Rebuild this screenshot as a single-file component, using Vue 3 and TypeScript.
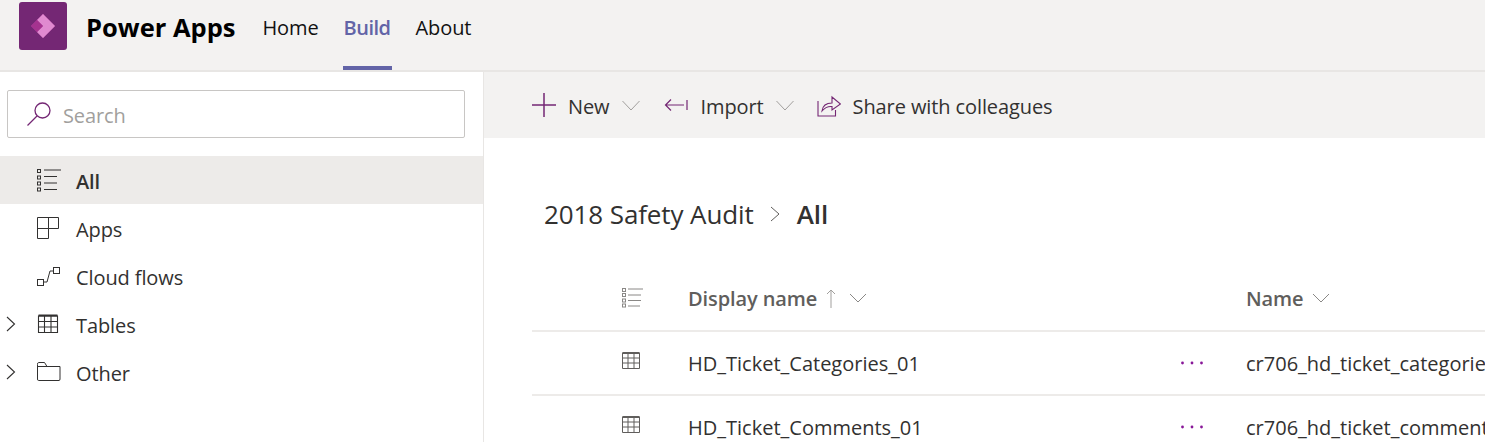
<script setup lang="ts">
interface NavItem { label: string; icon: string; expandable: boolean; active: boolean }
const nav: NavItem[] = [
  { label: 'All', icon: 'list', expandable: false, active: true },
  { label: 'Apps', icon: 'apps', expandable: false, active: false },
  { label: 'Cloud flows', icon: 'flow', expandable: false, active: false },
  { label: 'Tables', icon: 'table', expandable: true, active: false },
  { label: 'Other', icon: 'folder', expandable: true, active: false },
]
const rows = [
  { display: 'HD_Ticket_Categories_01', name: 'cr706_hd_ticket_categories_01' },
  { display: 'HD_Ticket_Comments_01', name: 'cr706_hd_ticket_comments_01' },
]
</script>

<template>
  <div class="page">
    <header class="topbar">
      <div class="logo">
        <svg width="26" height="26" viewBox="0 0 26 26">
          <path d="M13 1 L25 13 L13 25 L1 13 Z" fill="#b3409f" />
          <path d="M13 1 L25 13 L13 25 L7 19 L13 13 L7 7 Z" fill="#e08ad0" />
          <path d="M7 7 L13 13 L7 19 L1 13 Z" fill="#a5338f" />
        </svg>
      </div>
      <span class="brand">Power Apps</span>
      <nav class="tabs">
        <a class="tab">Home</a>
        <a class="tab tab-on">Build</a>
        <a class="tab">About</a>
      </nav>
    </header>
    <div class="body">
      <aside class="side">
        <div class="search">
          <svg class="search-ico" width="26" height="26" viewBox="0 0 26 26" fill="none" stroke="#742774" stroke-width="1.3">
            <circle cx="16.5" cy="9.5" r="7.5" />
            <path d="M11 15 L1.5 24.5" />
          </svg>
          <span class="search-text">Search</span>
        </div>
        <ul class="nav">
          <li v-for="n in nav" :key="n.label" class="nav-row" :class="{ 'nav-on': n.active }">
            <span class="caret">
              <svg v-if="n.expandable" width="10" height="16" viewBox="0 0 10 16" fill="none" stroke="#323130" stroke-width="1.1"><path d="M1 1 L8.5 8 L1 15" /></svg>
            </span>
            <span class="nav-ico">
              <svg v-if="n.icon === 'list'" width="25" height="24" viewBox="0 0 25 24" fill="none" stroke="#323130" stroke-width="1">
                <rect x="1.5" y="1.5" width="3" height="3" /><rect x="1.5" y="8" width="3" height="3" /><rect x="1.5" y="14" width="3" height="3" /><rect x="1.5" y="20" width="3" height="3" />
                <path d="M8 2 H25 M8 8.5 H21 M8 15 H21 M8 21.5 H21" />
              </svg>
              <svg v-else-if="n.icon === 'apps'" width="24" height="24" viewBox="0 0 24 24" fill="none" stroke="#323130" stroke-width="1">
                <path d="M1.5 1.5 H22.5 V12.5 H12.5 V22.5 H1.5 Z M12.5 1.5 V12.5 H1.5" />
              </svg>
              <svg v-else-if="n.icon === 'flow'" width="25" height="24" viewBox="0 0 25 24" fill="none" stroke="#323130" stroke-width="1">
                <rect x="1.5" y="15.5" width="6" height="6" /><rect x="17.5" y="3.5" width="6" height="6" />
                <path d="M8 18 H11 L14 7 H17" />
              </svg>
              <svg v-else-if="n.icon === 'table'" width="24" height="24" viewBox="0 0 24 24" fill="none" stroke="#323130" stroke-width="1.1">
                <path d="M2.5 4 H21.5 V20.5 H2.5 Z M2.5 9.5 H21.5 M2.5 15 H21.5 M8.5 4 V20.5 M15 4 V20.5" />
                <path d="M2.5 3.5 H21.5" stroke-width="2" />
              </svg>
              <svg v-else width="25" height="24" viewBox="0 0 25 24" fill="none" stroke="#323130" stroke-width="1">
                <path d="M1.5 4.5 V19 Q1.5 20.5 2.5 20.5 H23 Q24 20.5 24 19 V6.5 H11 L8.5 2.5 H2.5 Q1.5 2.5 1.5 4.5 M1.5 6.5 H11" />
              </svg>
            </span>
            <span class="nav-label">{{ n.label }}</span>
          </li>
        </ul>
      </aside>
      <main class="main">
        <div class="toolbar">
          <button class="tool tool-new">
            <svg width="24" height="24" viewBox="0 0 24 24" stroke="#742774" stroke-width="1.5" fill="none"><path d="M12 0 V24 M0 12 H24" /></svg>
            <span class="tool-text">New</span>
            <svg class="chev" width="18" height="11" viewBox="0 0 18 11" fill="none" stroke="#a19f9d" stroke-width="1"><path d="M0.5 1 L9 10 L17.5 1" /></svg>
          </button>
          <button class="tool tool-import">
            <svg width="24" height="14" viewBox="0 0 24 14" stroke="#742774" stroke-width="1.2" fill="none"><path d="M7 1.5 L1.5 7 L7 12.5 M1.5 7 H20 M23 2 V12" /></svg>
            <span class="tool-text">Import</span>
            <svg class="chev" width="18" height="11" viewBox="0 0 18 11" fill="none" stroke="#a19f9d" stroke-width="1"><path d="M0.5 1 L9 10 L17.5 1" /></svg>
          </button>
          <button class="tool tool-share">
            <svg width="24" height="23" viewBox="0 0 24 23" stroke="#742774" stroke-width="1.1" fill="none"><path d="M1 7 V22 H18.5 V16 M1 22 M5 17 Q6 9 15 9 V3 L23.5 10 L15 16 V12.5 Q9 12 5 17 Z" /></svg>
            <span class="tool-text">Share with colleagues</span>
          </button>
        </div>
        <div class="content">
          <div class="crumbs">
            <span class="crumb">2018 Safety Audit</span>
            <svg width="11" height="16" viewBox="0 0 11 16" fill="none" stroke="#605e5c" stroke-width="1"><path d="M1 1 L9 8 L1 15" /></svg>
            <span class="crumb crumb-on">All</span>
          </div>
          <div class="grid">
            <div class="grow ghead">
              <span class="c-ico">
                <svg width="21" height="20" viewBox="0 0 21 20" fill="none" stroke="#8a8886" stroke-width="1">
                  <rect x="0.5" y="0.5" width="3" height="3" /><rect x="0.5" y="5.5" width="3" height="3" /><rect x="0.5" y="11" width="3" height="3" /><rect x="0.5" y="16" width="3" height="3" />
                  <path d="M6 1 H21 M6 7 H19 M6 12.5 H19 M6 18 H18" />
                </svg>
              </span>
              <span class="c-display head-cell">
                <span class="txt">Display name</span>
                <svg class="arrow" width="10" height="19" viewBox="0 0 10 19" fill="none" stroke="#a19f9d" stroke-width="1"><path d="M5 19 V1 M1 5 L5 1 L9 5" /></svg>
                <svg class="hchev hchev-wide" width="18" height="10" viewBox="0 0 18 10" fill="none" stroke="#8a8886" stroke-width="1"><path d="M1 1 L9 9 L17 1" /></svg>
              </span>
              <span class="c-more"></span>
              <span class="c-name head-cell">
                <span class="txt">Name</span>
                <svg class="hchev" width="18" height="10" viewBox="0 0 18 10" fill="none" stroke="#8a8886" stroke-width="1"><path d="M1 1 L9 9 L17 1" /></svg>
              </span>
            </div>
            <div v-for="r in rows" :key="r.display" class="grow">
              <span class="c-ico">
                <svg class="row-ico" width="18" height="17" viewBox="0 0 18 17" fill="none" stroke="#605e5c" stroke-width="1">
                  <path d="M0.5 1 H17.5 V16.5 H0.5 Z M0.5 6 H17.5 M0.5 11 H17.5 M6 1 V16.5 M12 1 V16.5" />
                  <path d="M0.5 1 H17.5" stroke-width="2" />
                </svg>
              </span>
              <span class="c-display cell txt">{{ r.display }}</span>
              <span class="c-more">
                <svg width="22" height="4" viewBox="0 0 22 4" fill="#881798"><circle cx="1.5" cy="2" r="1.4" /><circle cx="11" cy="2" r="1.4" /><circle cx="20.5" cy="2" r="1.4" /></svg>
              </span>
              <span class="c-name cell txt">{{ r.name }}</span>
            </div>
          </div>
        </div>
      </main>
    </div>
  </div>
</template>

<style>
html, body { margin: 0; background: #fff; overflow: hidden; }
</style>

<style scoped>
.page { width: 1485px; height: 442px; overflow: hidden; display: flex; flex-direction: column; font-family: "Open Sans", "Noto Sans", sans-serif; color: #323130; background: #fff; }
.topbar { height: 70px; flex: none; display: flex; align-items: flex-start; background: #f3f2f1; border-bottom: 2px solid #e8e6e4; box-sizing: content-box; }
.logo { width: 48px; height: 48px; margin: 2px 0 0 19px; border-radius: 3px; background: #742774; display: flex; align-items: center; justify-content: center; }
.brand { margin: 8px 0 0 19px; font-size: 25.5px; line-height: 38px; font-weight: 700; color: #000; letter-spacing: 0; white-space: nowrap; }
.tabs { display: flex; gap: 24px; margin-left: 27px; }
.tab { height: 70px; box-sizing: border-box; padding-top: 12px; font-size: 20px; line-height: 32px; color: #111; letter-spacing: -0.1px; }
.tab-on { color: #6264a7; font-weight: 600; border-bottom: 4px solid #6264a7; padding-left: 1px; padding-right: 1px; letter-spacing: -0.5px; }
.body { flex: 1; display: flex; min-height: 0; }
.side { width: 483px; flex: none; box-sizing: content-box; border-right: 1px solid #e8e6e4; background: #fff; padding-top: 18px; }
.search { width: 458px; height: 48px; margin-left: 7px; box-sizing: border-box; border: 1px solid #c8c6c4; border-radius: 2px; display: flex; align-items: center; padding-left: 18px; gap: 11px; }
.search-text { font-size: 20px; color: #a19f9d; letter-spacing: -0.1px; line-height: 1; padding-top: 4px; }
.nav { list-style: none; margin: 18px 0 0; padding: 0; }
.nav-row { height: 48px; display: flex; align-items: center; font-size: 20px; color: #323130; }
.nav-on { background: #edebe9; font-weight: 600; }
.caret { width: 36px; padding-left: 6px; box-sizing: border-box; display: flex; align-items: center; }
.nav-ico { width: 40px; height: 24px; display: flex; }
.nav-label { letter-spacing: -0.1px; line-height: 1; padding-top: 3px; }
.main { flex: 1; min-width: 0; display: flex; flex-direction: column; }
.toolbar { height: 66px; flex: none; background: #f3f2f1; display: flex; align-items: center; padding-left: 48px; }
.tool { display: flex; align-items: center; border: 0; background: none; padding: 0; font: inherit; font-size: 20px; color: #323130; flex: none; }
.tool-text { letter-spacing: -0.1px; margin-left: 12px; line-height: 1; padding-top: 4px; }
.tool-import { margin-left: 24px; }
.tool-import .tool-text { margin-left: 13px; }
.tool-share { margin-left: 23px; }
.tool-share .tool-text { margin-left: 12px; }
.chev { margin-left: 12px; }
.content { padding: 0 0 0 48px; }
.crumbs { display: flex; align-items: center; margin-top: 56px; height: 40px; gap: 16px; padding-left: 12px; }
.crumb { font-size: 26px; letter-spacing: -0.1px; line-height: 40px; }
.crumb-on { font-weight: 600; }
.grid { margin-top: 32px; }
.grow { height: 64px; display: flex; align-items: center; border-bottom: 2px solid #edebe9; box-sizing: border-box; white-space: nowrap; }
.ghead { height: 66px; }
.c-ico { width: 156px; flex: none; box-sizing: border-box; padding-left: 90px; display: flex; align-items: center; }
.row-ico { margin-top: -6px; }
.c-display { width: 493px; flex: none; }
.c-more { width: 65px; flex: none; display: flex; }
.c-name { flex: none; }
.head-cell { display: flex; align-items: center; font-size: 20px; font-weight: 600; color: #605e5c; letter-spacing: -0.1px; line-height: 1; }
.txt { padding-top: 2px; }
.arrow { margin-left: 9px; }
.hchev { margin-left: 9px; }
.hchev-wide { margin-left: 13px; }
.cell { font-size: 20px; letter-spacing: 0; color: #323130; line-height: 1; }
</style>
